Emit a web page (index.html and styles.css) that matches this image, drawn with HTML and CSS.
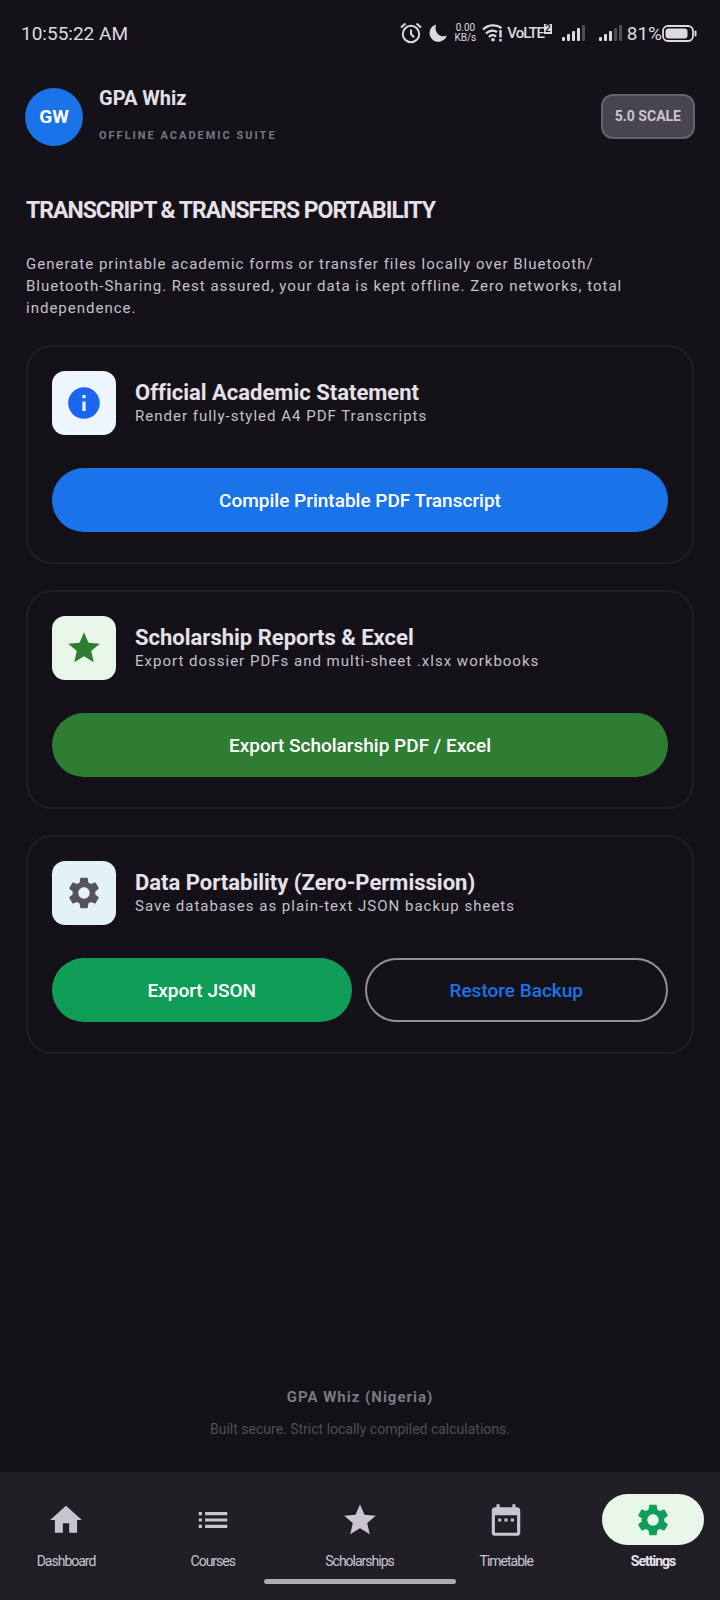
FILE: index.html
```html
<!DOCTYPE html>
<html lang="en">
<head>
  <meta charset="UTF-8" />
  <meta name="viewport" content="width=device-width, initial-scale=1" />
  <title>GPA Whiz</title>
  <link rel="stylesheet" href="styles.css">
</head>
<body>

  <div class="status-bar">
    <span class="clock">10:55:22 AM</span>
    <div class="status-icons">
      <svg class="alarm" width="22" height="22" viewBox="0 0 22 22" fill="none" stroke="currentColor" stroke-width="2">
        <circle cx="11" cy="12" r="8.2"/>
        <path d="M11 7.5V12l3 3.2M1 5.5L5.5 1.5M21 5.5L16.500 1.500"/>
      </svg>
      <svg class="moon" width="20" height="20" viewBox="0 0 20 20" fill="currentColor">
        <path d="M8 1.500A8.800 8.800 0 1 0 18.800 12.500C13 15.500 5.500 10 8 1.500z"/>
      </svg>
      <span class="speed">0.00<br>KB/s</span>
      <svg class="wifi" width="21" height="18" viewBox="0 0 21 18" fill="none" stroke="currentColor" stroke-width="2.400">
        <path d="M1 5.500C6 0.500 14 0 19.500 4M4 9.500C7.500 6 12 6 15 8M7 13C9 10.800 12 10.800 14 12.500"/>
        <circle cx="11" cy="15.800" r="1.800" fill="currentColor" stroke="none"/>
        <path d="M18.500 6v7.500M18.500 15v2.500"/>
      </svg>
      <span class="volte">VoLTE<sup>2</sup></span>
      <svg class="signal" width="24" height="16" viewBox="0 0 24 16" fill="currentColor">
        <rect x="0" y="12" width="3" height="4" rx="1"/>
        <rect x="5" y="9" width="3" height="7" rx="1"/>
        <rect x="10" y="6" width="3" height="10" rx="1"/>
        <rect x="15" y="3" width="3" height="13" rx="1"/>
        <rect x="20" y="0" width="3" height="16" rx="1" opacity=".3"/>
      </svg>
      <svg class="signal" width="24" height="16" viewBox="0 0 24 16" fill="currentColor">
        <rect x="0" y="12" width="3" height="4" rx="1"/>
        <rect x="5" y="9" width="3" height="7" rx="1"/>
        <rect x="10" y="6" width="3" height="10" rx="1"/>
        <rect x="15" y="3" width="3" height="13" rx="1" opacity=".3"/>
        <rect x="20" y="0" width="3" height="16" rx="1" opacity=".3"/>
      </svg>
      <span class="percent">81%</span>
      <svg class="battery" width="35" height="17" viewBox="0 0 35 17">
        <rect x="1" y="1" width="30" height="15" rx="5" fill="none" stroke="currentColor" stroke-width="1.800"/>
        <rect x="3.500" y="3.500" width="22" height="10" rx="3" fill="currentColor"/>
        <rect x="32.500" y="5.500" width="2" height="6" rx="1" fill="currentColor"/>
      </svg>
    </div>
  </div>

  <header class="app-header">
    <div class="avatar">GW</div>
    <div class="brand">
      <div class="brand-name">GPA Whiz</div>
      <div class="brand-tag">OFFLINE ACADEMIC SUITE</div>
    </div>
    <button class="scale-button" type="button">5.0 SCALE</button>
  </header>

  <main class="content">
    <h1>TRANSCRIPT &amp; TRANSFERS PORTABILITY</h1>
    <p class="intro">Generate printable academic forms or transfer files locally over Bluetooth/<wbr>Bluetooth-Sharing. Rest assured, your data is kept offline. Zero networks, total independence.</p>

    <section class="card">
      <div class="card-head">
        <div class="card-icon info">
          <svg width="38" height="38" viewBox="0 0 24 24" fill="currentColor"><path d="M12 2C6.480 2 2 6.480 2 12s4.480 10 10 10 10-4.480 10-10S17.520 2 12 2zm1 15h-2v-6h2v6zm0-8h-2V7h2v2z"/></svg>
        </div>
        <div class="card-text">
          <h2>Official Academic Statement</h2>
          <p>Render fully-styled A4 PDF Transcripts</p>
        </div>
      </div>
      <div class="actions">
        <button class="btn blue" type="button">Compile Printable PDF Transcript</button>
      </div>
    </section>

    <section class="card">
      <div class="card-head">
        <div class="card-icon star">
          <svg width="38" height="38" viewBox="0 0 24 24" fill="currentColor"><path d="M12 17.270L18.180 21l-1.640-7.030L22 9.240l-7.190-.61L12 2 9.190 8.630 2 9.240l5.460 4.730L5.820 21z"/></svg>
        </div>
        <div class="card-text">
          <h2>Scholarship Reports &amp; Excel</h2>
          <p>Export dossier PDFs and multi-sheet .xlsx workbooks</p>
        </div>
      </div>
      <div class="actions">
        <button class="btn green" type="button">Export Scholarship PDF / Excel</button>
      </div>
    </section>

    <section class="card">
      <div class="card-head">
        <div class="card-icon gear">
          <svg width="38" height="38" viewBox="0 0 24 24" fill="currentColor"><path d="M19.140 12.940c.04-.3.06-.61.06-.94 0-.32-.02-.64-.07-.94l2.030-1.580c.18-.14.23-.41.12-.61l-1.920-3.320c-.12-.22-.37-.29-.59-.22l-2.390.96c-.5-.38-1.030-.7-1.620-.94l-.36-2.540c-.04-.24-.24-.41-.48-.41h-3.840c-.24 0-.43.17-.47.41l-.36 2.540c-.59.24-1.130.57-1.620.94l-2.390-.96c-.22-.08-.47 0-.59.22L2.740 8.870c-.12.21-.08.47.12.61l2.030 1.580c-.05.3-.09.63-.09.94s.02.64.07.94l-2.030 1.580c-.18.14-.23.41-.12.61l1.920 3.320c.12.22.37.29.59.22l2.390-.96c.5.38 1.030.7 1.620.94l.36 2.540c.05.24.24.41.48.41h3.840c.24 0 .44-.17.47-.41l.36-2.540c.59-.24 1.130-.56 1.620-.94l2.390.96c.22.08.47 0 .59-.22l1.920-3.320c.12-.22.07-.47-.12-.61l-2.010-1.580zM12 15.600c-1.980 0-3.600-1.620-3.600-3.600s1.620-3.600 3.600-3.600 3.600 1.620 3.600 3.600-1.620 3.600-3.600 3.600z"/></svg>
        </div>
        <div class="card-text">
          <h2>Data Portability (Zero-Permission)</h2>
          <p>Save databases as plain-text JSON backup sheets</p>
        </div>
      </div>
      <div class="actions">
        <button class="btn emerald" type="button">Export JSON</button>
        <button class="btn outline" type="button">Restore Backup</button>
      </div>
    </section>
  </main>

  <footer class="credits">
    <div class="credits-name">GPA Whiz (Nigeria)</div>
    <div class="credits-note">Built secure. Strict locally compiled calculations.</div>
  </footer>

  <nav class="bottom-nav">
    <a class="nav-item" href="#dashboard">
      <span class="pill"><svg width="38" height="38" viewBox="0 0 24 24" fill="currentColor"><path d="M10 20v-6h4v6h5v-8h3L12 3 2 12h3v8z"/></svg></span>
      Dashboard
    </a>
    <a class="nav-item" href="#courses">
      <span class="pill"><svg width="38" height="38" viewBox="0 0 24 24" fill="currentColor"><path d="M3 13h2v-2H3v2zm0 4h2v-2H3v2zm0-8h2V7H3v2zm4 4h14v-2H7v2zm0 4h14v-2H7v2zM7 7v2h14V7H7z"/></svg></span>
      Courses
    </a>
    <a class="nav-item" href="#scholarships">
      <span class="pill"><svg width="38" height="38" viewBox="0 0 24 24" fill="currentColor"><path d="M12 17.270L18.180 21l-1.640-7.030L22 9.240l-7.190-.61L12 2 9.190 8.630 2 9.240l5.460 4.730L5.820 21z"/></svg></span>
      Scholarships
    </a>
    <a class="nav-item" href="#timetable">
      <span class="pill"><svg width="38" height="38" viewBox="0 0 24 24" fill="currentColor"><path d="M9 11H7v2h2v-2zm4 0h-2v2h2v-2zm4 0h-2v2h2v-2zm2-7h-1V2h-2v2H8V2H6v2H5c-1.110 0-1.990.9-1.990 2L3 20c0 1.100.89 2 2 2h14c1.100 0 2-.9 2-2V6c0-1.100-.9-2-2-2zm0 16H5V9h14v11z"/></svg></span>
      Timetable
    </a>
    <a class="nav-item active" href="#settings" aria-current="page">
      <span class="pill"><svg width="38" height="38" viewBox="0 0 24 24" fill="currentColor"><path d="M19.140 12.940c.04-.3.06-.61.06-.94 0-.32-.02-.64-.07-.94l2.030-1.580c.18-.14.23-.41.12-.61l-1.920-3.320c-.12-.22-.37-.29-.59-.22l-2.390.96c-.5-.38-1.030-.7-1.620-.94l-.36-2.540c-.04-.24-.24-.41-.48-.41h-3.840c-.24 0-.43.17-.47.41l-.36 2.540c-.59.24-1.130.57-1.620.94l-2.390-.96c-.22-.08-.47 0-.59.22L2.740 8.870c-.12.21-.08.47.12.61l2.030 1.580c-.05.3-.09.63-.09.94s.02.64.07.94l-2.030 1.580c-.18.14-.23.41-.12.61l1.920 3.320c.12.22.37.29.59.22l2.390-.96c.5.38 1.030.7 1.620.94l.36 2.540c.05.24.24.41.48.41h3.840c.24 0 .44-.17.47-.41l.36-2.540c.59-.24 1.130-.56 1.620-.94l2.390.96c.22.08.47 0 .59-.22l1.920-3.320c.12-.22.07-.47-.12-.61l-2.010-1.580zM12 15.600c-1.980 0-3.600-1.620-3.600-3.600s1.620-3.600 3.600-3.600 3.600 1.620 3.600 3.600-1.620 3.600-3.600 3.600z"/></svg></span>
      Settings
    </a>
    <div class="home-handle"></div>
  </nav>

</body>
</html>
```
FILE: styles.css
```css
* {
  box-sizing: border-box;
}

body {
  font-family: Roboto, "Liberation Sans", sans-serif;
  font-variant-ligatures: none;
  background: #141218;
  color: #e6e0e9;
  margin: 0;
  min-height: 100vh;
  display: flex;
  flex-direction: column;
}

h1, h2, p {
  margin: 0;
}

svg {
  display: block;
  flex: none;
}

/* status bar */
.status-bar {
  display: flex;
  justify-content: space-between;
  align-items: center;
  height: 66px;
  padding: 0 23px 0 21px;
  color: #dcdae0;
}

.clock, .percent {
  font-size: 19px;
}

.status-icons {
  display: flex;
  align-items: center;
  gap: 6px;
}

.speed {
  font-size: 10px;
  line-height: 10px;
  text-align: center;
}

.volte {
  display: flex;
  margin-left: -2px;
  font-size: 15px;
  font-weight: 500;
  letter-spacing: -1px;
}

.volte sup {
  align-self: flex-start;
  padding: 0 2px 0 1px;
  font-size: 10px;
  line-height: 10px;
  background: #dcdae0;
  color: #141218;
}

.signal {
  margin-left: 4px;
}

.signal + .signal {
  margin-left: 7px;
}

.percent {
  margin: 0 -6px 0 -2px;
}

/* header */
.app-header {
  display: flex;
  align-items: center;
  gap: 16px;
  padding: 17px 25px 0;
  height: 85px;
}

.avatar {
  width: 58px;
  height: 58px;
  border-radius: 50%;
  background: #1a73e8;
  color: #fff;
  font-size: 19px;
  font-weight: 700;
  line-height: 58px;
  text-align: center;
}

.brand {
  flex: 1;
}

.brand-name {
  font-size: 20px;
  font-weight: 700;
  line-height: 38px;
}

.brand-tag {
  font-size: 11px;
  font-weight: 700;
  line-height: 38px;
  letter-spacing: 2px;
  color: #79767d;
}

.scale-button {
  height: 45px;
  margin-bottom: 2px;
  padding: 0 12px;
  border: 2px solid #65616a;
  border-radius: 12px;
  background: #49454f;
  color: #cac4d0;
  font-family: inherit;
  font-size: 14px;
  font-weight: 700;
}

/* content */
.content {
  display: flex;
  flex-direction: column;
  gap: 26px;
  padding: 44px 26px 0;
}

h1 {
  font-size: 23px;
  font-weight: 700;
  line-height: 32px;
  letter-spacing: -1px;
}

.intro {
  max-width: 620px;
  font-size: 15px;
  line-height: 22px;
  letter-spacing: 1px;
  color: #c4c0c8;
}

.card {
  padding: 24px 24px 30px;
  border: 2px solid #211f26;
  border-radius: 26px;
}

.card-head {
  display: flex;
  align-items: center;
  gap: 19px;
}

.card-icon {
  display: flex;
  align-items: center;
  justify-content: center;
  width: 64px;
  height: 64px;
  border-radius: 13px;
}

.card-icon.info {
  background: #edf6ff;
  color: #1b66f0;
}

.card-icon.star {
  background: #e8f5e9;
  color: #2e7d32;
}

.card-icon.gear {
  background: #e3f2f9;
  color: #55545c;
}

.card-text {
  padding-top: 2px;
}

h2 {
  font-size: 22px;
  font-weight: 700;
  line-height: 24px;
}

.card p {
  font-size: 15px;
  line-height: 22px;
  letter-spacing: 1px;
  color: #c4c0c8;
}

.actions {
  display: flex;
  gap: 13px;
  margin-top: 33px;
}

.btn {
  flex: 1 1 0;
  height: 64px;
  padding: 0;
  border: 0;
  border-radius: 32px;
  color: #fff;
  font-family: inherit;
  font-size: 19px;
  font-weight: 500;
}

.btn.blue {
  background: #1a73e8;
}

.btn.green {
  background: #2e7d32;
}

.btn.emerald {
  background: #0f9d58;
}

.btn.outline {
  background: transparent;
  border: 2px solid #938f99;
  color: #1a73e8;
}

/* footer */
.credits {
  margin-top: auto;
  padding-bottom: 27px;
  text-align: center;
}

.credits-name {
  font-size: 15px;
  font-weight: 700;
  line-height: 32px;
  letter-spacing: 1px;
  color: #7c7980;
}

.credits-note {
  font-size: 14px;
  line-height: 32px;
  color: #504d54;
}

/* bottom navigation */
.bottom-nav {
  position: relative;
  display: flex;
  justify-content: space-between;
  height: 128px;
  padding: 22px 16px 0 15px;
  background: #211f26;
}

.nav-item {
  display: flex;
  flex-direction: column;
  align-items: center;
  gap: 6px;
  width: 102px;
  color: #cac4d0;
  font-size: 14px;
  line-height: 20px;
  letter-spacing: -1px;
  text-decoration: none;
}

.pill {
  display: flex;
  align-items: center;
  justify-content: center;
  width: 100%;
  height: 51px;
  border-radius: 26px;
}

.nav-item.active {
  color: #e6e0e9;
  font-weight: 700;
}

.nav-item.active .pill {
  background: #e8f5e9;
  color: #0f9d58;
}

.home-handle {
  position: absolute;
  left: 50%;
  bottom: 16px;
  width: 192px;
  height: 5px;
  margin-left: -96px;
  border-radius: 3px;
  background: #aeabb2;
}
```
